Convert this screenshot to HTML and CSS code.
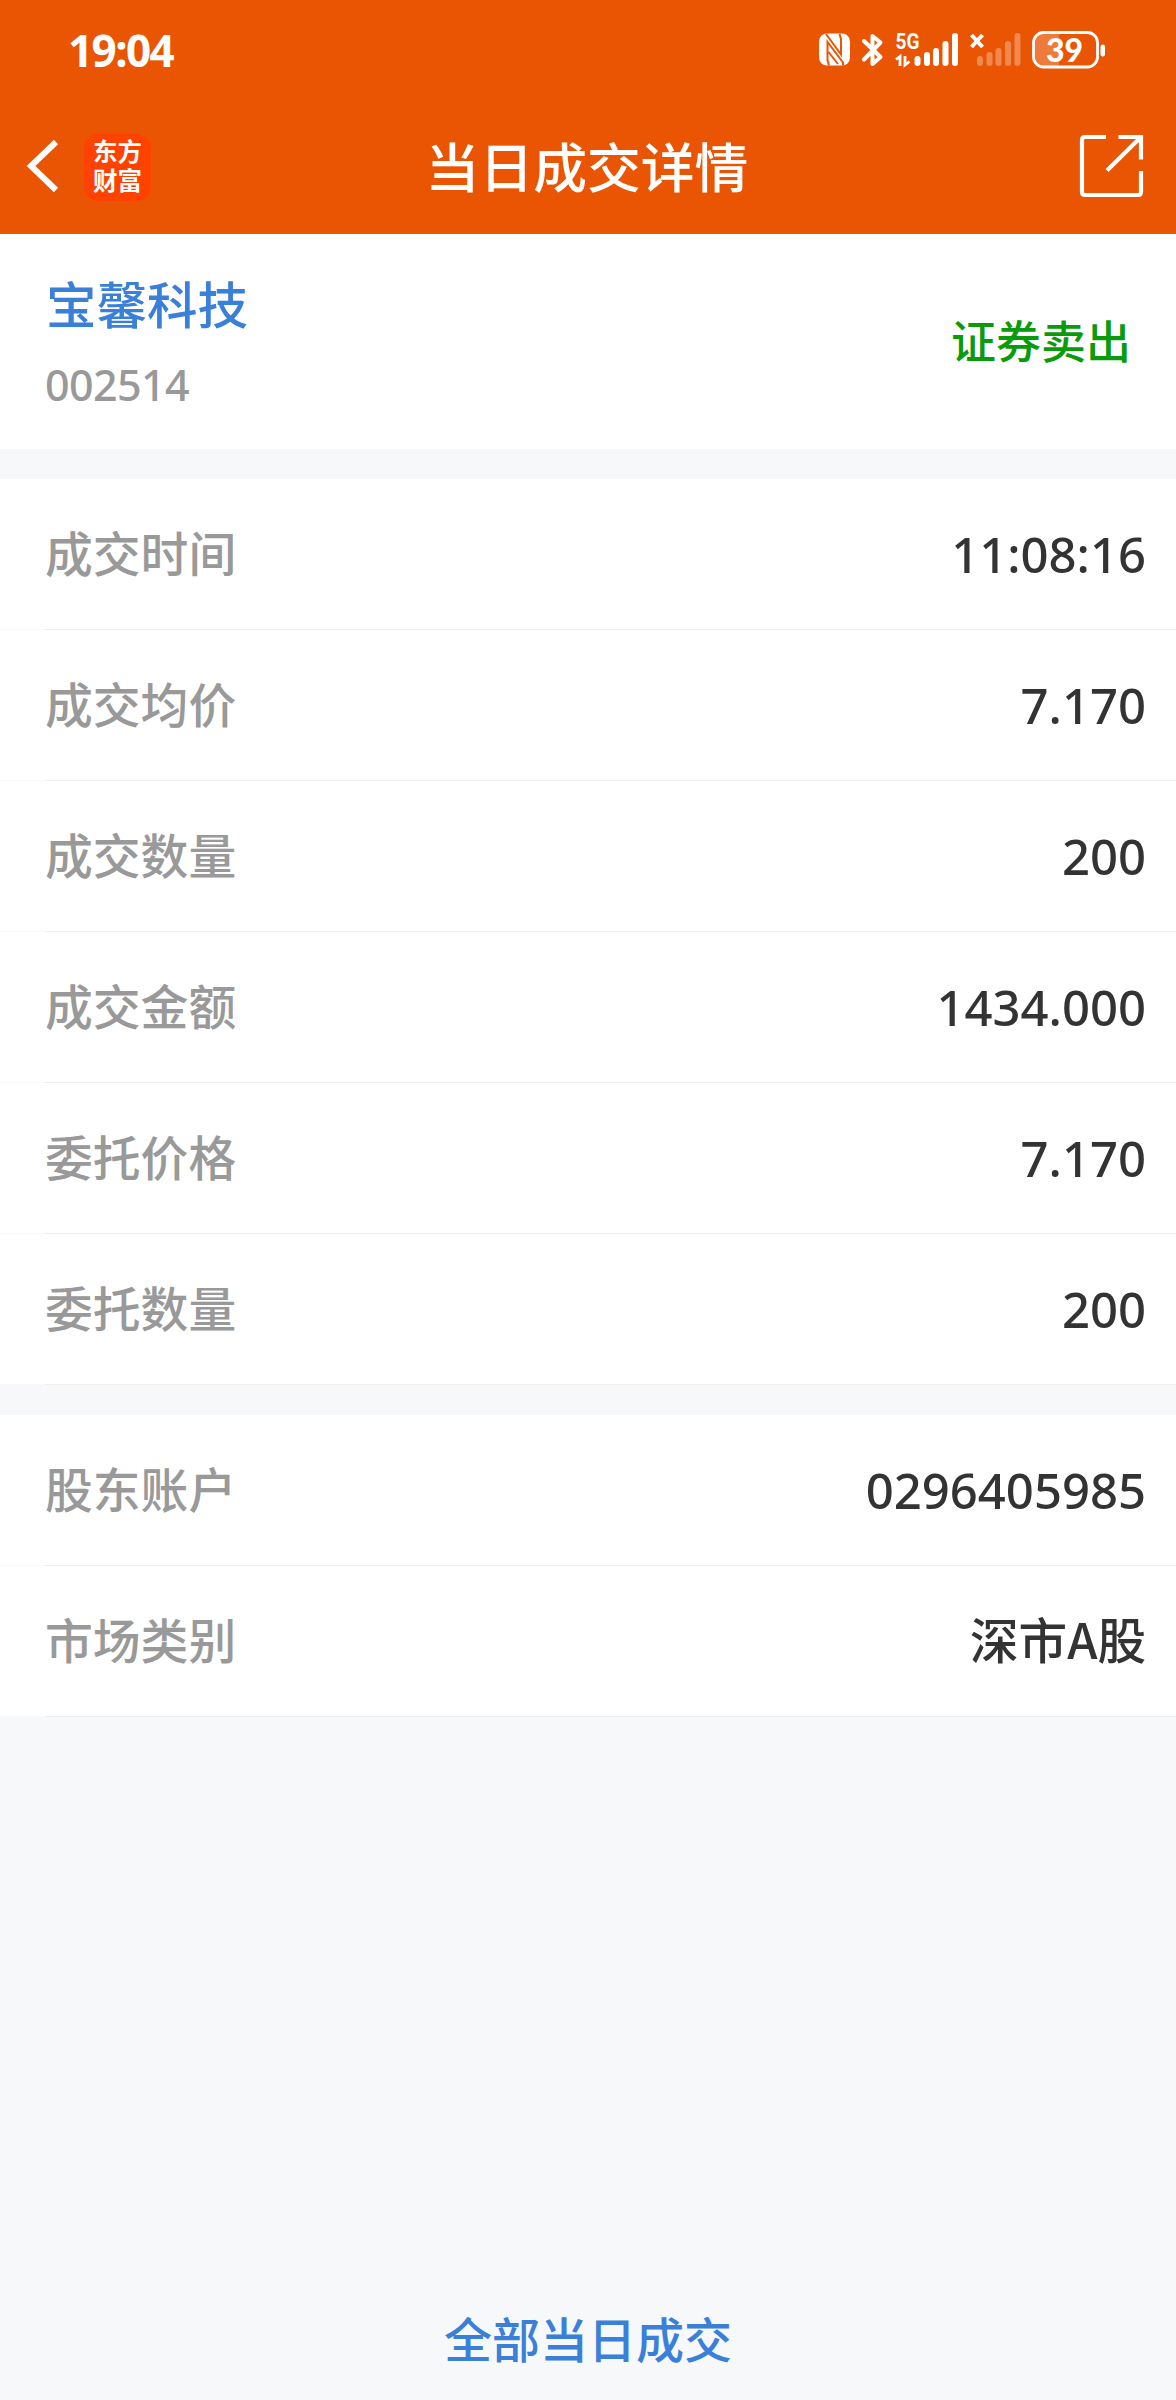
FILE: index.html
```
<!DOCTYPE html>
<html lang="zh-CN">
<head>
  <meta charset="UTF-8" />
  <meta name="viewport" content="width=device-width, initial-scale=1.0"/>
  <title>当日成交详情</title>
  <link rel="stylesheet" href="styles.css">
</head>
<body>

  <header>
    <div class="status-bar">
      <span class="clock">19:04</span>
      <!-- nfc, bluetooth, 5G, sim 2, battery -->
      <svg class="status-icons" width="290" height="44" viewBox="0 0 290 44">
        <rect x="1" y="5.500" width="31" height="32" rx="8" fill="#fff"/>
        <path d="M8 6L23 26.500V11L21.500 6M11 37.500L9.500 32V14L25 34.500V37.500M10.500 24L20 36" stroke="#ea5504" stroke-width="2" fill="none"/>
        <path d="M46 13L62.500 29L54.500 36V8L62.500 14.500L46 31.500" stroke="#fff" stroke-width="4" stroke-linecap="round" stroke-linejoin="round" fill="none"/>
        <text class="net" x="77.500" y="21" textLength="24" lengthAdjust="spacingAndGlyphs">5G</text>
        <path d="M78 31.500L82 28.500V38M87 28V37L91.500 33.500" stroke="#fff" stroke-width="2.800" fill="none"/>
        <g stroke="#fff" stroke-width="6" stroke-linecap="round">
          <path d="M99.500 31V35M109 27V35M118 23V35M127.500 16V35M137 8V35"/>
          <path d="M162 31V35M171.500 27V35M180.500 23V35M190 16V35M199.500 8V35" opacity=".3"/>
        </g>
        <path d="M153.500 7L164.500 19M164.500 7L153.500 19" stroke="#fff" stroke-width="4"/>
        <path d="M226 6H241V38H226Q217 37 217 28V15Q217 7 226 6Z" fill="#fff" opacity=".22"/>
        <rect x="215.500" y="4.500" width="64" height="34.500" rx="10" stroke="#fff" stroke-width="2.800" fill="none"/>
        <rect x="282.500" y="16.500" width="4.500" height="12" rx="2.200" fill="#fff"/>
        <text class="level" x="246.500" y="33.500" text-anchor="middle">39</text>
      </svg>
    </div>

    <nav>
      <div class="nav-left">
        <svg width="36" height="60" viewBox="0 0 36 60">
          <path d="M32 5L7 29L32 53" stroke="#fff" stroke-width="6" fill="none"/>
        </svg>
        <div class="logo">东方<br>财富</div>
      </div>
      <h1>当日成交详情</h1>
      <svg class="share" width="66" height="66" viewBox="0 0 66 66">
        <path d="M27 3H6Q3 3 3 6V58Q3 61 6 61H59Q62 61 62 58V37M39.500 3H62V25.500M61 4L28 36.500" stroke="#fff" stroke-width="4.200" fill="none"/>
      </svg>
    </nav>
  </header>

  <section class="stock">
    <div>
      <div class="stock-name">宝馨科技</div>
      <div class="stock-code">002514</div>
    </div>
    <div class="side">证券卖出</div>
  </section>

  <section class="list">
    <div class="row"><span class="label">成交时间</span><span class="value">11:08:16</span></div>
    <div class="row"><span class="label">成交均价</span><span class="value">7.170</span></div>
    <div class="row"><span class="label">成交数量</span><span class="value">200</span></div>
    <div class="row"><span class="label">成交金额</span><span class="value">1434.000</span></div>
    <div class="row"><span class="label">委托价格</span><span class="value">7.170</span></div>
    <div class="row"><span class="label">委托数量</span><span class="value">200</span></div>
  </section>

  <section class="list">
    <div class="row"><span class="label">股东账户</span><span class="value">0296405985</span></div>
    <div class="row"><span class="label">市场类别</span><span class="value market">深市A股</span></div>
  </section>

  <footer>
    <a class="all-link">全部当日成交</a>
  </footer>

</body>
</html>
```
FILE: styles.css
```
* {
  box-sizing: border-box;
}

body {
  font-family: "Noto Sans CJK SC", sans-serif;
  font-weight: 500;
  margin: 0;
  min-height: 2400px;
  display: flex;
  flex-direction: column;
  background-color: #f6f8fa;
  color: #333;
}

header {
  height: 234px;
  background-color: #ea5504;
  color: #fff;
}

.status-bar {
  height: 100px;
  padding: 0 68px;
  display: flex;
  justify-content: space-between;
  align-items: center;
}

.clock {
  font-family: "Noto Sans", sans-serif;
  font-size: 44px;
  font-weight: 700;
  letter-spacing: -1.6px;
}

.net {
  font-family: Roboto, sans-serif;
  font-size: 22px;
  font-weight: 700;
  fill: #fff;
}

.level {
  font-family: Lato, sans-serif;
  font-size: 32px;
  font-weight: 900;
  fill: #fff;
}

nav {
  height: 134px;
  padding: 0 31px 0 24px;
  display: grid;
  grid-template-columns: 1fr auto 1fr;
  align-items: center;
}

.nav-left {
  display: flex;
  align-items: center;
  gap: 24px;
}

.logo {
  width: 67px;
  height: 67px;
  border-radius: 14px;
  background-color: #ff4200;
  font-size: 24.5px;
  font-weight: 700;
  line-height: 29px;
  padding-top: 2px;
  text-align: center;
}

h1 {
  margin: 0 0 0 5px;
  padding-bottom: 4px;
  font-size: 53.8px;
  font-weight: 500;
  line-height: 70px;
}

.share {
  justify-self: end;
}

.stock {
  height: 215px;
  padding: 33px 45px 0 46px;
  background-color: #fff;
  display: flex;
  justify-content: space-between;
}

.stock-name {
  font-size: 50.5px;
  line-height: 70px;
  color: #3a80d8;
}

.stock-code {
  margin: 20px 0 0 -1px;
  font-family: "Noto Sans", sans-serif;
  font-size: 43px;
  line-height: 56px;
  letter-spacing: -0.6px;
  color: #999;
}

.side {
  padding-top: 40px;
  font-size: 45px;
  line-height: 66px;
  color: #0a9b0a;
}

.list {
  margin-top: 30px;
  background-color: #fff;
}

.row {
  height: 151px;
  padding: 0 30px 0 45px;
  display: flex;
  justify-content: space-between;
  align-items: center;
  background: linear-gradient(to right, #f9f9fb 45px, #ededed 45px) bottom / 100% 1px no-repeat;
}

.label {
  padding-bottom: 7px;
  font-size: 47.8px;
  color: #999;
}

.value {
  padding-bottom: 2px;
  font-family: "Noto Sans", sans-serif;
  font-size: 49px;
}

.market {
  padding-bottom: 7px;
  font-family: "Noto Sans CJK SC", sans-serif;
  font-size: 48.6px;
}

footer {
  margin-top: auto;
  height: 120px;
  padding-bottom: 7px;
  display: flex;
  justify-content: center;
  align-items: center;
}

.all-link {
  font-size: 48px;
  color: #3a80d8;
}
```
